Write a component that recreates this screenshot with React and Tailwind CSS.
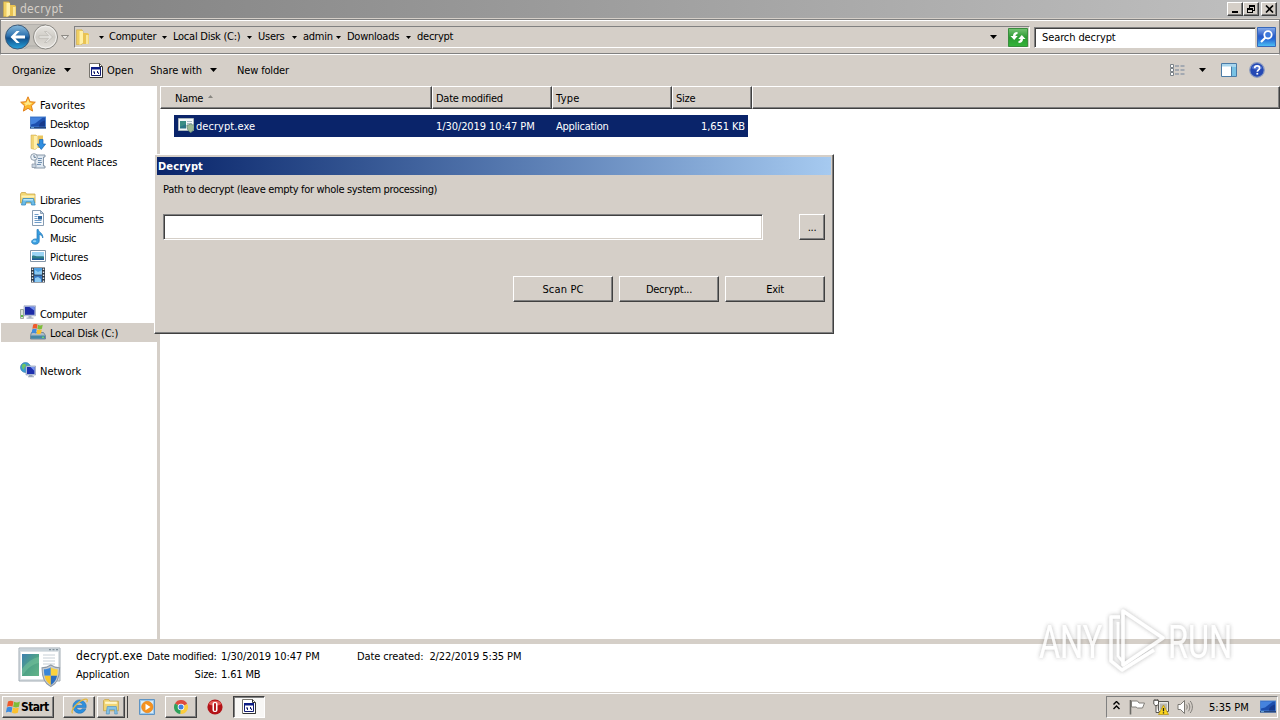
import React from "react";

const RAISED =
  "border border-t-white border-l-white border-r-[#404040] border-b-[#404040] shadow-[inset_-1px_-1px_0_#808080] bg-[#d5cfc8]";

function Svg({ size = 16, box = 16, className = "", children }) {
  return (
    <svg width={size} height={size} viewBox={`0 0 ${box} ${box}`} className={`shrink-0 ${className}`}>
      {children}
    </svg>
  );
}

function Caret({ className = "" }) {
  return (
    <svg width="7" height="4" viewBox="0 0 7 4" className={`shrink-0 ${className}`}>
      <path d="M0 0h7L3.5 4z" fill="#000" />
    </svg>
  );
}

function SmallCaret() {
  return (
    <svg width="5" height="3" viewBox="0 0 5 3" className="shrink-0">
      <path d="M0 0h5L2.5 3z" fill="#000" />
    </svg>
  );
}

const FolderIcon = ({ className }) => (
  <Svg className={className}>
    <path d="M1.500.800h5.500l1 1.500v12l-2 1.400H1.500z" fill="#f0cf62" stroke="#c9a33c" strokeWidth=".5" />
    <path d="M4.500 2h3.500v12l-3.500 2z" fill="#fff0a8" />
    <path d="M8 4h4.500l1.500 1v10H8z" fill="#e9c353" />
    <path d="M11 6h2.500v9H11z" fill="#fae79a" />
  </Svg>
);

const StarIcon = () => (
  <Svg>
    <path d="M8 .8l2.100 4.900 5.200.5-3.900 3.600 1.200 5.300L8 12.300l-4.600 2.800 1.200-5.300L.7 6.200l5.200-.5z" fill="#fcb72c" stroke="#e2801c" strokeWidth="1" />
    <path d="M8 3l1.300 3.600 3 .5-2.600 2L8 8.500 5 10l.5-2L3.500 7l3-.4z" fill="#ffe98a" />
  </Svg>
);

const DesktopIcon = () => (
  <Svg>
    <path d="M0 1.500h16v12H0z" fill="#4d83cf" />
    <path d="M1 2.500h14v9H1z" fill="#1d4fae" />
    <path d="M1 2.500h12L5 8.500l-4 1z" fill="#4583de" />
    <path d="M9 11.500c0-3 2-5 6-6v6z" fill="#173a8c" />
    <path d="M0 12h16v1.500H0z" fill="#26477e" />
    <path d="M1 12.300h3v.8H1z" fill="#84c5f4" />
  </Svg>
);

const DownloadsIcon = () => (
  <Svg>
    <path d="M1 1h5l1 1v12l-2 1.500-4-1z" fill="#f2d577" stroke="#c8a649" strokeWidth=".5" />
    <path d="M4 2h3v12l-3 1.500z" fill="#fff0ac" />
    <path d="M7.500 1.500H13V14H7.500z" fill="#e8c45e" />
    <path d="M9.500 5.500h3.500v4.500h2.600L11.300 15.500 7 10h2.500z" fill="#2f8ee0" stroke="#1766b5" strokeWidth=".7" />
  </Svg>
);

const RecentIcon = () => (
  <Svg>
    <path d="M5 2h10v2h-1.500v9H15v2H4v-2h1z" fill="#dfe8f1" stroke="#7b8c9e" strokeWidth=".9" />
    <path d="M8 5.500h4M8 7.500h3.500M8 9.500h4M7 11.500h4" stroke="#6688aa" strokeWidth=".9" />
    <circle cx="4" cy="4" r="3.300" fill="#eef4f9" stroke="#8694a3" strokeWidth=".9" />
    <path d="M4 2v2.300h2" stroke="#42617f" strokeWidth=".8" fill="none" />
    <path d="M2 11h4v3.500H2z" fill="#c7d3df" stroke="#8694a3" strokeWidth=".7" />
  </Svg>
);

const LibrariesIcon = () => (
  <Svg>
    <path d="M.5 3l1-1.500h4L6.500 3H15v9H.5z" fill="#f3d773" stroke="#c9a64a" strokeWidth=".8" />
    <path d="M1.500 4.500h13v2h-13z" fill="#fff2b5" />
    <path d="M1.500 14L3 7.500h10.500L15.200 14h-3.700l-.5-3H6l-.6 3z" fill="#6bbce8" stroke="#388bc0" strokeWidth=".8" />
    <path d="M3.500 8h9.500v1.500H3.300z" fill="#b8e6fa" />
  </Svg>
);

const DocumentsIcon = () => (
  <Svg>
    <path d="M2.500.5h8l3 3v12h-11z" fill="#fcfdff" stroke="#7b92aa" strokeWidth=".9" />
    <path d="M10.500.5v3h3z" fill="#b9cbe0" stroke="#7b92aa" strokeWidth=".8" />
    <path d="M4.500 4.500h4M4.500 6.500h3M4.500 8.500h3M4.500 10.500h7M4.500 12.500h7" stroke="#6f9cc8" />
    <path d="M8 6h4v3.500H8z" fill="#31689f" />
  </Svg>
);

const MusicIcon = () => (
  <Svg>
    <path d="M8.300.5c.3 3 5 3.500 4.500 8.500-.5-2.300-2.200-3.300-3.600-3.600v6.600c0 2-1.700 3.300-4 3.300-2.200 0-3.600-1.100-3.600-2.500 0-1.800 2-2.900 4-2.900.6 0 1 .1 1.400.2V.5z" fill="#3b9fe0" stroke="#1d75b7" strokeWidth=".7" />
    <ellipse cx="4.600" cy="12.200" rx="1.700" ry="1" fill="#93d4f8" />
  </Svg>
);

const PicturesIcon = () => (
  <Svg>
    <path d="M.5 2.500h15v11H.5z" fill="#fff" stroke="#8496a8" />
    <path d="M2 4h12v8H2z" fill="#9bd4f4" />
    <path d="M2 8c2-1.500 4 .5 6 .3S12 8 14 8.500V12H2z" fill="#2e7d86" />
    <path d="M2 10.500h12V12H2z" fill="#1e5b9a" />
  </Svg>
);

const VideosIcon = () => (
  <Svg>
    <path d="M1 .5h14v15H1z" fill="#303a46" />
    <path d="M4 1h8v6.500H4z" fill="#4d9fe0" />
    <path d="M4 8.500h8V15H4z" fill="#3778c2" />
    <path d="M5 3l3 2 4-2v4.500H5zM5 11l3-1 3 2v3H5z" fill="#8ccaf2" />
    <path d="M2.500 1.500v14M13.500 1.500v14" stroke="#e8edf2" strokeWidth="1.400" strokeDasharray="1.500 1.500" />
  </Svg>
);

const ComputerIcon = () => (
  <Svg>
    <path d="M.5 4.500h3v9h-3z" fill="#d9e2d6" stroke="#8b978b" strokeWidth=".8" />
    <path d="M1 10h2v2H1z" fill="#5cba47" />
    <path d="M4 .8h11.500v10H4z" fill="#c9d3e8" stroke="#8794b0" strokeWidth=".6" />
    <path d="M5 1.800h9.500v8H5z" fill="#1c2ba6" />
    <path d="M9 1.800h5.500v4z" fill="#6f8dec" />
    <path d="M8.500 10.800h3v1.700h2v1.300h-7v-1.300h2z" fill="#a9b2c2" />
  </Svg>
);

const WinFlag = () => (
  <g>
    <path d="M2.500 2C4.500.8 6 .9 8 2L7 7.200C5.200 6.200 3.500 6.200 1.500 7.200z" fill="#ee5a2c" />
    <path d="M8.600 2.300c2 1 3.500.9 5.800-.2l-1 5.200c-2.200 1-3.800 1-5.800 0z" fill="#7ebd3a" />
    <path d="M1.400 7.900c2-1 3.600-1 5.500 0L5.900 13c-2-1-3.500-1-5.500 0z" fill="#3b8be0" />
    <path d="M7.500 8.100c2 1 3.600 1 5.800 0l-1 5.100c-2.200 1-3.800 1-5.800 0z" fill="#fbc02d" />
  </g>
);

const DiskIcon = () => (
  <Svg>
    <path d="M1.500 8.500h12l2 3v3.500H.5v-3.500z" fill="#aebbc6" stroke="#63788b" strokeWidth=".8" />
    <path d="M1 11.500h14v3.200H1z" fill="#4587a5" />
    <path d="M12 12.800h2v1h-2z" fill="#7cf05a" />
    <g transform="translate(1.200 -1) scale(.8)">
      <WinFlag />
    </g>
  </Svg>
);

const NetworkIcon = () => (
  <Svg>
    <circle cx="5.500" cy="5.500" r="5" fill="#3b9bd2" stroke="#2a76a8" strokeWidth=".6" />
    <path d="M2 3c2-2.500 4-1 4 .5S4 5 4 7 1.500 6 2 3zM7 2l3 2-1.500 3z" fill="#6cc565" />
    <path d="M6 4h9.500v9H6z" fill="#c3cfe6" stroke="#7f8fae" strokeWidth=".6" />
    <path d="M7 5h7.500v7H7z" fill="#1d2fae" />
    <path d="M10.500 5h4v4z" fill="#7896f0" />
    <path d="M9 13h3.500v1.200h1.500v1H8v-1h1z" fill="#9ba7ba" />
  </Svg>
);

const ProgramIcon = () => (
  <svg width="14" height="15" viewBox="0 0 14 15" className="shrink-0">
    <path d="M.5.5h10l3 3v11H.5z" fill="#fff" stroke="#77746d" />
    <path d="M10.500.5v3h3" fill="none" stroke="#333" />
    <path d="M2.500 4.500h9v8h-9z" fill="#fff" stroke="#101a70" />
    <path d="M2 4h10v2.500H2z" fill="#0c1c85" />
    <path d="M4 8.500h2v1H4zM5 9.500h1v1.500H5zM8 8h1v2H8zM9 9.500h1V11H9z" fill="#101a70" />
    <path d="M13.500 4v10.500H1" fill="none" stroke="#333" />
  </svg>
);

function Shield() {
  return (
    <g>
      <path d="M10 0C7 2 4 2.500 1 2.500 1 11 3 17 10 20c7-3 9-9 9-17.500-3 0-6-.5-9-2.500z" fill="#c5ccd4" stroke="#8e99a5" />
      <path d="M10 2C8 3.300 5.500 4 3 4c0 2.300.2 4.200.6 6H10z" fill="#3b86d8" />
      <path d="M10 2c2 1.300 4.500 2 7 2 0 2.300-.2 4.200-.6 6H10z" fill="#fbd23d" />
      <path d="M3.600 10H10v8.500c-3.500-1.600-5.500-4.500-6.400-8.500z" fill="#f9c62c" />
      <path d="M16.400 10H10v8.500c3.500-1.600 5.500-4.500 6.400-8.500z" fill="#2a6cc0" />
    </g>
  );
}

const ExeIcon = () => (
  <Svg>
    <path d="M.5 1.500h15v12H.5z" fill="#f4f7f7" stroke="#aab7bd" />
    <path d="M2 4h6v7.500H2z" fill="#2c7585" />
    <path d="M2 4h6v3L2 10z" fill="#3b8d84" />
    <path d="M9 4.500h5M9 6.500h5" stroke="#a9bac6" />
    <g transform="translate(8.500 7) scale(.42)">
      <path d="M10 0C7 2 4 2.500 1 2.500 1 11 3 17 10 20c7-3 9-9 9-17.500-3 0-6-.5-9-2.500z" fill="#9db894" stroke="#66897a" strokeWidth="2" />
    </g>
  </Svg>
);

const ExeLargeIcon = () => (
  <svg width="44" height="42" viewBox="0 0 44 42" className="shrink-0">
    <defs>
      <linearGradient id="exeScreen" x1="0" y1="0" x2="1" y2="1">
        <stop offset="0" stopColor="#3d7fb0" />
        <stop offset=".5" stopColor="#4ea287" />
        <stop offset="1" stopColor="#63b487" />
      </linearGradient>
    </defs>
    <path d="M1 2h41v33H1z" fill="#dce2e6" stroke="#a1abb3" />
    <path d="M1.500 2.500h40V5h-40z" fill="#c9d3da" />
    <path d="M31 3.700h2M34.500 3.700h2M38 3.700h2" stroke="#71808c" />
    <path d="M3 6h37v27H3z" fill="#fff" />
    <path d="M4 8h17v22H4z" fill="url(#exeScreen)" />
    <path d="M4 23C9 16 15 12 21 11v6C14 18 9 23 4 30z" fill="#7fc9a0" opacity=".45" />
    <path d="M25 9h12M25 12h12M25 15h12M25 18h12" stroke="#c6cfd6" />
    <g transform="translate(23 19) scale(.98 1.08)">
      <Shield />
    </g>
  </svg>
);

const BackForward = () => (
  <svg width="68" height="28" viewBox="0 0 68 28" className="shrink-0">
    <defs>
      <linearGradient id="backFill" x1="0" y1="0" x2="0" y2="1">
        <stop offset="0" stopColor="#86b9dc" />
        <stop offset=".45" stopColor="#2f73b0" />
        <stop offset=".55" stopColor="#11508c" />
        <stop offset="1" stopColor="#27a3dc" />
      </linearGradient>
      <linearGradient id="fwdFill" x1="0" y1="0" x2="0" y2="1">
        <stop offset="0" stopColor="#e9e7e3" />
        <stop offset=".5" stopColor="#cfccc6" />
        <stop offset="1" stopColor="#e4e1dc" />
      </linearGradient>
    </defs>
    <path d="M13.500 2h28a12 12 0 010 24h-28z" fill="#c4c1bb" />
    <path d="M14 1.500h28M20 26l5-3h9l5 3" fill="none" stroke="#aaa8a4" strokeWidth=".8" />
    <circle cx="13.500" cy="14" r="12" fill="url(#backFill)" stroke="#3d5a78" />
    <path d="M12.500 8L6.500 14l6 6h3.200l-4.300-4.500H21v-3h-9.600L15.700 8z" fill="#fff" />
    <circle cx="41.500" cy="14" r="12" fill="url(#fwdFill)" stroke="#8b8984" />
    <circle cx="41.500" cy="14" r="10.800" fill="none" stroke="#f3f2f0" />
    <path d="M43 8.500l5.500 5.500-5.500 5.500h-2.500l4-4.200H35v-2.600h9.500l-4-4.200z" fill="#e4e2de" stroke="#bab7b1" strokeWidth=".7" />
    <path d="M57.500 12.500h7L61 16.500z" fill="#eceae6" stroke="#777570" strokeWidth=".8" />
  </svg>
);

const RefreshIcon = () => (
  <svg width="20" height="19" viewBox="0 0 20 19" className="shrink-0">
    <defs>
      <linearGradient id="refreshFill" x1="0" y1="0" x2="0" y2="1">
        <stop offset="0" stopColor="#77c374" />
        <stop offset=".5" stopColor="#2a9a31" />
        <stop offset="1" stopColor="#33b53a" />
      </linearGradient>
    </defs>
    <path d="M.5.5h19v18H.5z" fill="url(#refreshFill)" stroke="#3a8d3e" />
    <path d="M9.500 4C6.500 4 5 5.500 5 8H2.500L6.200 12l3.500-4H7.500c0-1.300.8-1.800 2-2z" fill="#fff" />
    <path d="M10.500 15c3 0 4.500-1.500 4.500-4h2.500L13.800 7l-3.500 4h2.200c0 1.300-.8 1.800-2 2z" fill="#fff" />
  </svg>
);

const SearchIcon = () => (
  <svg width="19" height="20" viewBox="0 0 19 20" className="shrink-0">
    <defs>
      <linearGradient id="searchFill" x1="0" y1="0" x2="0" y2="1">
        <stop offset="0" stopColor="#8aaeea" />
        <stop offset=".45" stopColor="#2a5bc8" />
        <stop offset=".6" stopColor="#2565d4" />
        <stop offset="1" stopColor="#4fc3f5" />
      </linearGradient>
    </defs>
    <path d="M.5.5h18v19H.5z" fill="url(#searchFill)" stroke="#3767b9" />
    <circle cx="11" cy="7.800" r="3.700" fill="#3c78dc" stroke="#fff" strokeWidth="1.800" />
    <path d="M8.500 10.500L4 15" stroke="#fff" strokeWidth="2.200" />
  </svg>
);

const ViewIcon = () => (
  <svg width="16" height="13" viewBox="0 0 16 13" className="shrink-0">
    {[0, 4, 8].map((y) => (
      <g key={y}>
        <path d={`M.5 ${y + 0.5}h3v3h-3z`} fill="#fff" stroke="#7b8288" />
        <path d={`M5 ${y + 2}h4M10.500 ${y + 2}h4`} stroke="#73849a" strokeWidth="1.200" />
      </g>
    ))}
  </svg>
);

const PaneIcon = () => (
  <svg width="16" height="14" viewBox="0 0 16 14" className="shrink-0">
    <path d="M.5.5h15v13H.5z" fill="#fff" stroke="#4a7ba6" />
    <path d="M1 1h14v2.500H1z" fill="#a9d6ee" />
    <path d="M10.500 3.500v10" stroke="#4a7ba6" />
    <path d="M11 3.500h4V13h-4z" fill="#78c2e4" />
  </svg>
);

const HelpIcon = () => (
  <Svg>
    <circle cx="8" cy="8" r="7.300" fill="#2448b4" stroke="#8c9cc0" strokeWidth="1.200" />
    <path d="M2.500 6C4 2 12 2 13.500 6 11 8 5 8 2.500 6z" fill="#6486dc" opacity=".7" />
    <path d="M5.700 6.200c0-3 4.900-3 4.900 0 0 1.700-2.300 1.700-2.300 3.600" fill="none" stroke="#fff" strokeWidth="1.700" />
    <path d="M7.400 10.900h1.800v1.700H7.400z" fill="#fff" />
  </Svg>
);

const IeIcon = () => (
  <Svg size={17}>
    <path d="M8 1.800a6.300 6.300 0 106 8.300h-3.400a3.200 3.200 0 01-5.600-1.100h9.300A6.300 6.300 0 008 1.800zM5 6.800c.4-3 5.600-3 6 0z" fill="#2b8fdf" stroke="#1a68b0" strokeWidth=".5" fillRule="evenodd" />
    <path d="M1.500 14.500C-1 12 6 3.500 12.500 1.300c3-1 3.300.7 2.300 2.700" fill="none" stroke="#e3b740" strokeWidth="1.200" />
  </Svg>
);

const ExplorerIcon = () => (
  <Svg size={17}>
    <path d="M.5 2.500L1.500 1.500h4l1 1.500h8v9H.5z" fill="#f2d675" stroke="#c7a64e" strokeWidth=".8" />
    <path d="M2 3.500h11v2H2z" fill="#fff7cc" />
    <path d="M3 15l1-7h8.500l1 7h-2.500v-4H6v4z" fill="#84c3e6" stroke="#5a96c0" strokeWidth=".7" />
  </Svg>
);

const MediaIcon = () => (
  <Svg>
    <path d="M.5.5h15v15H.5z" fill="#9cc8ec" stroke="#5e94c4" />
    <path d="M2 2h12v12H2z" fill="#d8ecf8" />
    <circle cx="8.300" cy="8" r="5.700" fill="#f5921f" stroke="#e07a10" strokeWidth=".6" />
    <path d="M6.500 4.800L11.500 8l-5 3.200z" fill="#fff" />
  </Svg>
);

const ChromeIcon = () => (
  <Svg>
    <path d="M8 8L2 4.500A6.900 6.900 0 0114.200 5z" fill="#dd4b3e" />
    <path d="M8 8L2 4.500A6.900 6.900 0 007.500 15z" fill="#2ea15a" />
    <path d="M8 8l6.200-3A6.900 6.900 0 017.500 15z" fill="#fbcc3c" />
    <circle cx="8" cy="8" r="3.300" fill="#fff" />
    <circle cx="8" cy="8" r="2.500" fill="#3f7fe0" />
  </Svg>
);

const OperaIcon = () => (
  <Svg>
    <circle cx="8" cy="8" r="7.600" fill="#b31217" />
    <path d="M1.500 5C3 .5 13 .5 14.500 5c-3 2-10 2-13 0z" fill="#e45a57" />
    <rect x="5.500" y="3" width="5" height="10" rx="2" fill="#fff" />
    <rect x="7" y="4" width="2" height="8" rx="1" fill="#b8181c" />
  </Svg>
);

const FlagIcon = () => (
  <Svg>
    <path d="M1.500 1v14.500" stroke="#6b6a66" strokeWidth="1.600" />
    <path d="M2.500 2h6l1.500 2h5.500l-2 5H8.500L7 8H2.500z" fill="#fff" stroke="#77756f" strokeWidth=".9" />
  </Svg>
);

const NetTrayIcon = () => (
  <Svg>
    <path d="M5.500 2.500h10v10h-10z" fill="#e8e8e4" stroke="#5a5a56" />
    <path d="M7 4.500h7v6H7z" fill="#b8b8b3" />
    <path d="M.8 1.200h4.700v4l-1.500 1.300H2.200L.8 5.200zM3 6.500v7h3" fill="#fff" stroke="#55534f" />
    <path d="M2 0v2M4.200 0v2" stroke="#55534f" />
    <path d="M10.500 6l5 9.500h-10z" fill="#fbd51c" stroke="#b08c10" strokeWidth=".7" />
    <path d="M10.500 9v3.300M10.500 13.200v1.400" stroke="#222" strokeWidth="1.300" />
  </Svg>
);

const SpeakerIcon = () => (
  <Svg>
    <path d="M1 5.500h2.500L7.500 1.500v13l-4-4H1z" fill="#fff" stroke="#6f6d68" strokeWidth=".9" />
    <path d="M9.300 5.500c1.200 1.500 1.200 3.500 0 5M11.300 3.800c2 2.500 2 6 0 8.500M13.200 2c2.900 3.500 2.900 8.500 0 12" fill="none" stroke="#76746f" strokeWidth=".9" />
  </Svg>
);

function Sidebar() {
  const groups = [
    [
      [StarIcon, "Favorites", "tracking-[0.08px]"],
      [DesktopIcon, "Desktop", ""],
      [DownloadsIcon, "Downloads", ""],
      [RecentIcon, "Recent Places", "tracking-[-0.12px]"],
    ],
    [
      [LibrariesIcon, "Libraries", ""],
      [DocumentsIcon, "Documents", "tracking-[-0.32px]"],
      [MusicIcon, "Music", "tracking-[-0.4px]"],
      [PicturesIcon, "Pictures", "tracking-[-0.1px]"],
      [VideosIcon, "Videos", ""],
    ],
    [
      [ComputerIcon, "Computer", "tracking-[-0.32px]"],
      [DiskIcon, "Local Disk (C:)", "tracking-[-0.2px]"],
    ],
    [[NetworkIcon, "Network", "tracking-[0px]"]],
  ];
  return (
    <nav className="flex w-[157px] shrink-0 flex-col gap-[19px] bg-white pt-[9px]">
      {groups.map((items, g) => (
        <ul key={g}>
          {items.map(([Icon, label, track], i) => (
            <li
              key={label}
              className={`ml-px flex h-[19px] gap-1 ${i ? "pl-[29px]" : "pl-[19px]"} ${label.startsWith("Local") ? "bg-[#d5cfc8]" : ""}`}
            >
              <span className="pt-px"><Icon /></span>
              <span className={`pt-1 ${track}`}>{label}</span>
            </li>
          ))}
        </ul>
      ))}
    </nav>
  );
}

function HeaderCell({ className, children }) {
  return (
    <div className={`flex h-full items-center border-b border-l border-r border-t border-b-[#404040] border-l-white border-r-[#404040] border-t-white pt-[2px] shadow-[inset_-1px_-1px_0_#808080] ${className}`}>
      {children}
    </div>
  );
}

function DialogButton({ className, children }) {
  return <button className={`flex h-[26px] items-center justify-center pt-[2px] ${RAISED} ${className}`}>{children}</button>;
}

function DecryptDialog() {
  return (
    <div className={`absolute left-[154px] top-[154px] h-[180px] w-[680px] p-[2px] ${RAISED}`}>
      <div className="flex h-[18px] items-center bg-gradient-to-r from-[#0a246a] to-[#a6caf0] pl-px pt-px font-bold tracking-[0.15px] text-white">
        Decrypt
      </div>
      <div className="pl-[6px] pr-[6px]">
        <div className="mt-[8px] h-[14px] tracking-[-0.33px]">Path to decrypt (leave empty for whole system processing)</div>
        <div className="mt-[17px] flex justify-between">
          <div className="h-[26px] w-[600px] border border-b-white border-l-[#808080] border-r-white border-t-[#808080] bg-white shadow-[inset_1px_1px_0_#404040,inset_-1px_-1px_0_#d5cfc8]" />
          <DialogButton className="w-[26px]">...</DialogButton>
        </div>
        <div className="mt-9 flex justify-end gap-[6px]">
          <DialogButton className="w-[100px] tracking-[0.15px]">Scan PC</DialogButton>
          <DialogButton className="w-[100px]">Decrypt...</DialogButton>
          <DialogButton className="w-[100px]">Exit</DialogButton>
        </div>
      </div>
    </div>
  );
}

function Watermark() {
  return (
    <svg width="220" height="88" viewBox="-8 -8 220 88" className="absolute left-[1026px] top-[596px] overflow-visible">
      <defs>
        <filter id="soft" x="-10%" y="-10%" width="120%" height="120%">
          <feDropShadow dx="0" dy="0" stdDeviation="2" floodColor="#777" floodOpacity=".62" />
        </filter>
      </defs>
      <g filter="url(#soft)" fill="#fff" opacity=".85">
        <text x="5" y="54" fontFamily="Roboto" fontSize="46" textLength="63" lengthAdjust="spacingAndGlyphs">ANY</text>
        <text x="134" y="54" fontFamily="Roboto" fontSize="46" textLength="64" lengthAdjust="spacingAndGlyphs">RUN</text>
        <path d="M89 7v54l40-27zM86 13h-9v44l11 9 32-20" fill="none" stroke="#fff" strokeWidth="3.500" strokeLinejoin="round" />
        <path d="M84 18v34l5 6" fill="none" stroke="#fff" strokeWidth="2.500" />
      </g>
    </svg>
  );
}

export default function App() {
  const crumbs = [
    ["Computer", "w-[64px]"],
    ["Local Disk (C:)", "w-[85px]"],
    ["Users", "w-[45px]"],
    ["admin", "w-[44px]"],
    ["Downloads", "w-[70px]"],
  ];
  return (
    <div className="relative flex h-[720px] w-[1280px] cursor-default flex-col overflow-hidden bg-[#d5cfc8] font-['DejaVu_Sans_Condensed','DejaVu_Sans',sans-serif] text-[11px] leading-[14px] tracking-[-0.25px] text-black whitespace-nowrap">
      <header className="flex h-[18px] shrink-0 items-center bg-gradient-to-r from-[#808080] to-[#c0c0c0] pl-[2px] pr-[3px]">
        <FolderIcon />
        <span className="ml-[2px] text-[12px] tracking-[0.25px] text-[#d5cfc8]">decrypt</span>
        <div className="ml-auto flex h-[14px]">
          <button className={`flex w-4 items-end justify-center pb-[2px] ${RAISED}`}>
            <span className="mr-px h-[2px] w-[6px] bg-black" />
          </button>
          <button className={`flex w-4 items-center justify-center ${RAISED}`}>
            <svg width="10" height="10" viewBox="0 0 10 10">
              <path d="M3 1h6v1H3zM3 2h1v2H3zM8 3h1v4H8zM7 6h1v1H7zM1 4h6v2H1zM1 6h1v3H1zM6 6h1v3H6zM2 8h4v1H2zM3 2h6v1H3z" fill="#000" />
            </svg>
          </button>
          <button className={`ml-[2px] flex w-4 items-center justify-center ${RAISED}`}>
            <svg width="9" height="8" viewBox="0 0 9 8">
              <path d="M1 .5l7 7M8 .5l-7 7" stroke="#000" strokeWidth="1.600" />
            </svg>
          </button>
        </div>
      </header>

      <div className="mt-px flex h-[36px] shrink-0 items-center border border-b-white border-l-[#808080] border-r-[#808080] border-t-[#808080] pl-[3px] shadow-[inset_0_1px_0_#fff,inset_0_-1px_0_#808080]">
        <BackForward />
        <div className="ml-[2px] flex h-[22px] w-[956px] shrink-0 items-center border border-b-white border-l-[#808080] border-r-white border-t-[#808080] pr-px">
          <FolderIcon className="mb-px" />
          <span className="ml-[8px]"><SmallCaret /></span>
          <div className="ml-[5px] flex items-center">
            {crumbs.map(([name, w]) => (
              <div key={name} className={`flex items-center justify-between pr-[6px] ${w}`}>
                <span>{name}</span>
                <SmallCaret />
              </div>
            ))}
            <span>decrypt</span>
          </div>
          <Caret className="ml-auto mr-[11px]" />
          <RefreshIcon />
        </div>
        <div className="ml-1 flex h-[21px] w-[222px] items-center border border-b-white border-l-[#808080] border-r-[#d5cfc8] border-t-[#808080] bg-white pl-[7px] pt-[2px] tracking-[-0.1px] shadow-[inset_1px_1px_0_#404040]">
          Search decrypt
        </div>
        <span className="ml-px"><SearchIcon /></span>
      </div>

      <div className="flex h-[31px] shrink-0 items-center pb-px pl-3 pr-[15px]">
        <span className="w-[52px] pt-[2px] tracking-[-0.1px]">Organize</span>
        <Caret />
        <span className="ml-[18px]"><ProgramIcon /></span>
        <span className="ml-1 w-[43px] pt-[2px] tracking-[0px]">Open</span>
        <span className="w-[60px] pt-[2px] tracking-[-0.08px]">Share with</span>
        <Caret />
        <span className="ml-5 pt-[2px] tracking-[-0.15px]">New folder</span>
        <span className="ml-auto"><ViewIcon /></span>
        <Caret className="ml-[13px]" />
        <span className="ml-[15px]"><PaneIcon /></span>
        <span className="ml-3"><HelpIcon /></span>
      </div>

      <main className="flex h-[553px] shrink-0">
        <Sidebar />
        <div className="w-[3px] shrink-0 bg-[#d5cfc8]" />
        <div className="flex-1 bg-white">
          <div className="flex h-[23px] bg-[#d5cfc8]">
            <HeaderCell className="w-[272px] pl-[14px]">
              Name
              <svg width="5" height="3" viewBox="0 0 5 3" className="mb-[4px] ml-[5px]">
                <path d="M2.500 0L5 3H0z" fill="#888680" />
              </svg>
            </HeaderCell>
            <HeaderCell className="w-[120px] pl-[3px]">Date modified</HeaderCell>
            <HeaderCell className="w-[120px] pl-[3px] tracking-[0.3px]">Type</HeaderCell>
            <HeaderCell className="w-[80px] pl-[3px]">Size</HeaderCell>
            <HeaderCell className="flex-1" />
          </div>
          <div className="ml-[14px] mt-[6px] flex h-[22px] w-[574px] bg-[#0a246a] pl-1 pr-[3px] pt-[2px] text-white">
            <ExeIcon />
            <div className="ml-[2px] flex flex-1 pt-[3px]">
              <span className="w-[240px] tracking-[0.05px]">decrypt.exe</span>
              <span className="w-[120px] tracking-[-0.08px]">1/30/2019 10:47 PM</span>
              <span>Application</span>
              <span className="ml-auto tracking-[-0.1px]">1,651 KB</span>
            </div>
          </div>
        </div>
      </main>

      <div className="h-[5px] shrink-0 bg-[#d5cfc8]" />
      <section className="flex h-[48px] shrink-0 bg-white pl-[18px] pt-[2px]">
        <ExeLargeIcon />
        <div className="ml-[14px] mt-[3px] grid auto-rows-[14px] grid-cols-[71px_70px_140px_auto] content-start gap-y-1">
          <span className="text-[12px] tracking-[0.25px]">decrypt.exe</span>
          <span className="pt-px tracking-[-0.28px]">Date modified:</span>
          <span className="pl-1 pt-px tracking-[-0.08px]">1/30/2019 10:47 PM</span>
          <span className="pt-px tracking-[-0.11px]">Date created:&nbsp; 2/22/2019 5:35 PM</span>
          <span className="pt-px tracking-[-0.17px]">Application</span>
          <span className="pt-px text-right">Size:</span>
          <span className="pl-1 pt-px tracking-[-0.15px]">1.61 MB</span>
        </div>
      </section>

      <footer className="flex flex-1 items-center border-t border-[#d5cfc8] pb-px pr-[2px] pt-px shadow-[inset_0_1px_0_#fff]">
        <button className={`ml-[2px] flex h-[22px] w-[52px] items-center pl-[2px] text-[12px] font-bold tracking-[-0.65px] ${RAISED}`}>
          <Svg><g transform="translate(.5 .5)"><WinFlag /></g></Svg>
          Start
        </button>
        <button className={`ml-[9px] flex h-[22px] w-[32px] items-center justify-center ${RAISED}`}><IeIcon /></button>
        <button className={`ml-[2px] flex h-[22px] w-[28px] items-center justify-center ${RAISED}`}><ExplorerIcon /></button>
        <div className="h-[22px] w-[3px] border-r border-[#404040]" />
        <span className="ml-[11px]"><MediaIcon /></span>
        <button className={`ml-[10px] flex h-[22px] w-[32px] items-center justify-center ${RAISED}`}><ChromeIcon /></button>
        <span className="ml-[10px]"><OperaIcon /></span>
        <button className="ml-[10px] flex h-[22px] w-[32px] items-center justify-center border border-b-white border-l-[#404040] border-r-white border-t-[#404040] bg-[#f8f7f5] shadow-[inset_1px_1px_0_#808080]">
          <ProgramIcon />
        </button>
        <div className="ml-auto flex h-[22px] w-[172px] items-center border border-b-white border-l-[#808080] border-r-white border-t-[#808080] pl-[6px]">
          <svg width="7" height="9" viewBox="0 0 7 9" className="mb-[3px]">
            <path d="M.5 3.500l3-3 3 3M.5 8l3-3 3 3" fill="none" stroke="#000" strokeWidth="1.400" />
          </svg>
          <span className="ml-[9px]"><FlagIcon /></span>
          <span className="ml-2"><NetTrayIcon /></span>
          <span className="ml-2"><SpeakerIcon /></span>
          <span className="ml-4 w-[51px] pt-[2px] tracking-[0px]">5:35 PM</span>
          <DesktopIcon />
        </div>
      </footer>

      <DecryptDialog />
      <Watermark />
    </div>
  );
}
